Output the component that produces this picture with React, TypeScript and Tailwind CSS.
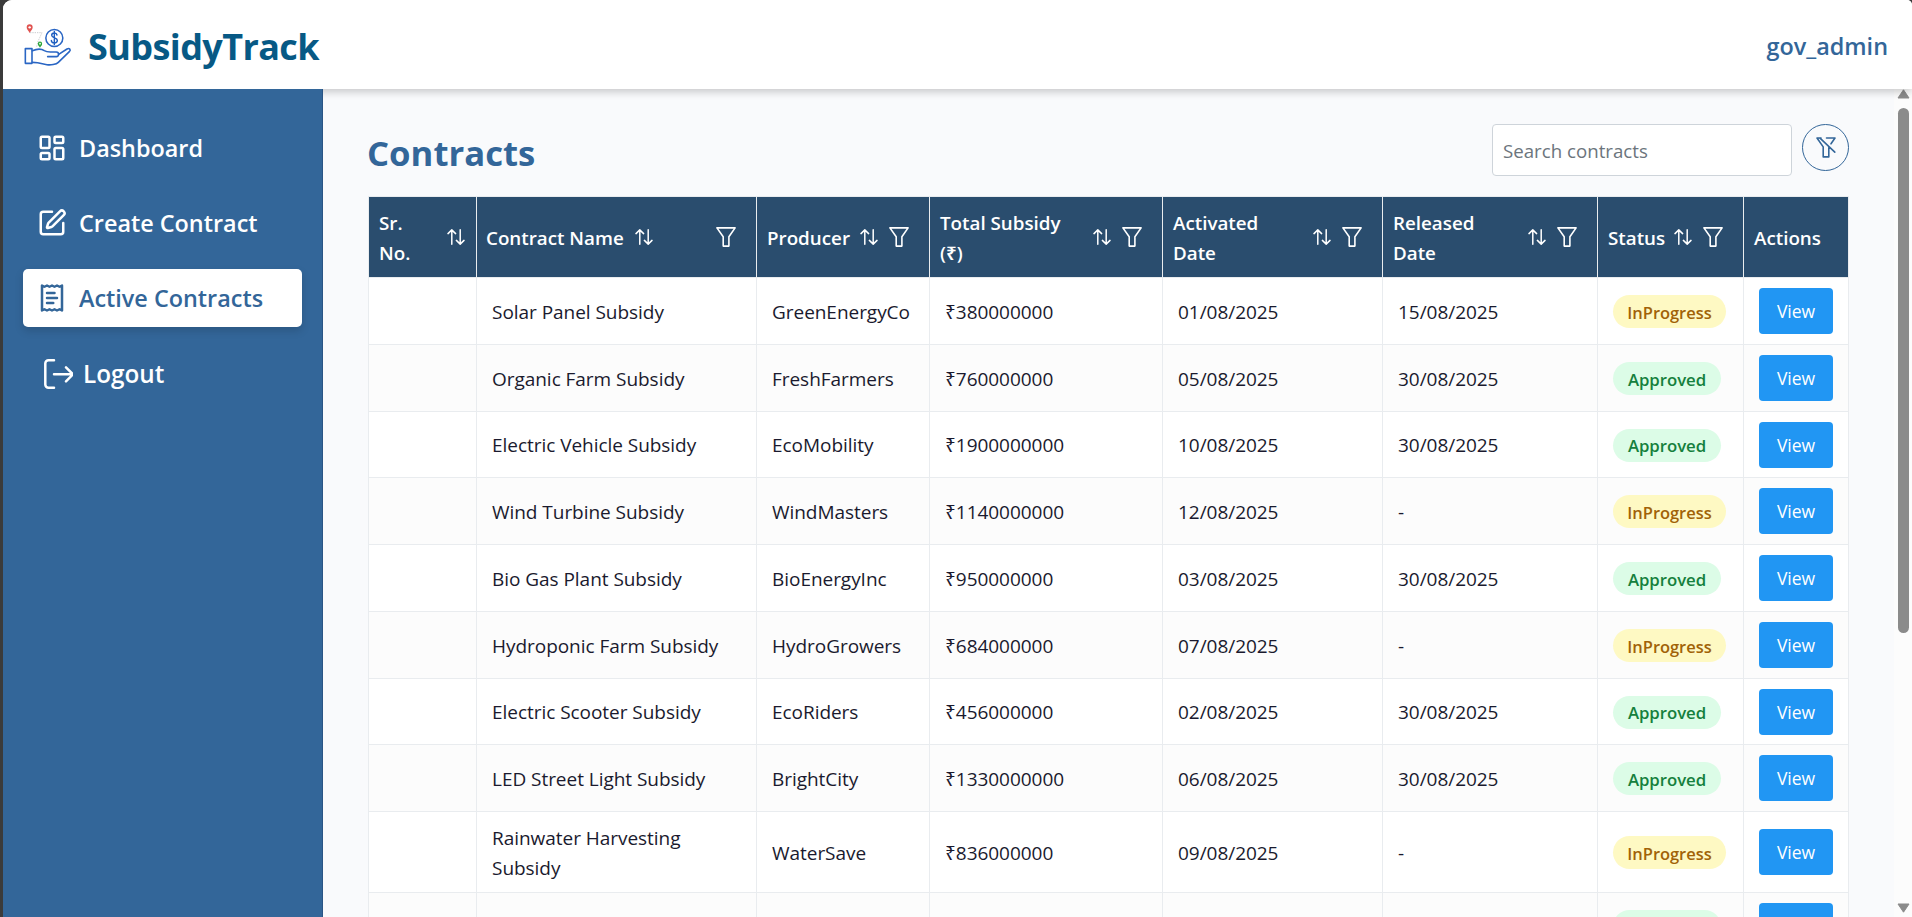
import React from "react";
import { LuLayoutDashboard, LuSquarePen, LuReceiptText } from "react-icons/lu";

type Status = "InProgress" | "Approved";

interface Contract {
  name: string;
  producer: string;
  subsidy: string;
  activated: string;
  released: string;
  status: Status;
  height: string;
}

const contracts: Contract[] = [
  { name: "Solar Panel Subsidy", producer: "GreenEnergyCo", subsidy: "₹380000000", activated: "01/08/2025", released: "15/08/2025", status: "InProgress", height: "h-[67px]" },
  { name: "Organic Farm Subsidy", producer: "FreshFarmers", subsidy: "₹760000000", activated: "05/08/2025", released: "30/08/2025", status: "Approved", height: "h-[67px]" },
  { name: "Electric Vehicle Subsidy", producer: "EcoMobility", subsidy: "₹1900000000", activated: "10/08/2025", released: "30/08/2025", status: "Approved", height: "h-[66px]" },
  { name: "Wind Turbine Subsidy", producer: "WindMasters", subsidy: "₹1140000000", activated: "12/08/2025", released: "-", status: "InProgress", height: "h-[67px]" },
  { name: "Bio Gas Plant Subsidy", producer: "BioEnergyInc", subsidy: "₹950000000", activated: "03/08/2025", released: "30/08/2025", status: "Approved", height: "h-[67px]" },
  { name: "Hydroponic Farm Subsidy", producer: "HydroGrowers", subsidy: "₹684000000", activated: "07/08/2025", released: "-", status: "InProgress", height: "h-[67px]" },
  { name: "Electric Scooter Subsidy", producer: "EcoRiders", subsidy: "₹456000000", activated: "02/08/2025", released: "30/08/2025", status: "Approved", height: "h-[66px]" },
  { name: "LED Street Light Subsidy", producer: "BrightCity", subsidy: "₹1330000000", activated: "06/08/2025", released: "30/08/2025", status: "Approved", height: "h-[67px]" },
  { name: "Rainwater Harvesting Subsidy", producer: "WaterSave", subsidy: "₹836000000", activated: "09/08/2025", released: "-", status: "InProgress", height: "h-[81px]" },
];

function Logo() {
  return (
    <svg width="60" height="56" viewBox="0 0 180 168" fill="none" className="shrink-0">
      <path d="M29 48C25 41 20 37 20 31a9 9 0 0 1 18 0c0 6-5 10-9 17z" fill="#e0524f" />
      <circle cx="29" cy="31" r="3.6" fill="#fff" />
      <path d="M30 47h36l-12 26-4 16" stroke="#9aa0a6" strokeWidth="1.6" strokeDasharray="4 3" />
      <path d="M60 92c-3-5-6.500-8-6.500-12a6.500 6.500 0 0 1 13 0c0 4-3.500 7-6.500 12z" fill="#2aa53a" />
      <circle cx="60" cy="80" r="2.600" fill="#fff" />
      <circle cx="103" cy="63" r="25.500" stroke="#2a66c4" strokeWidth="4.600" />
      <path d="M111 54c-1-5-5-6-8-6-5 0-8 3-8 7 0 9 17 6 17 15 0 5-4 8-9 8s-9-3-9-8M103 43v40" stroke="#1f5fc0" strokeWidth="4.200" strokeLinecap="round" />
      <g stroke="#2a66c4" strokeWidth="4.800" strokeLinejoin="round" strokeLinecap="round">
        <path d="M16 95h20v44H16z" />
        <path d="M37 101c12-5 26-7 36 0 6 4 10 4 18 4h18c9 0 9 14 0 14H83" />
        <path d="M116 112l25-16c7-4 13 2 7 8l-33 32c-6 6-24 9-34 7l-28-6c-6-1-10-1-16-1" />
      </g>
    </svg>
  );
}

function SortIcon() {
  return (
    <svg width="18" height="16" viewBox="0 0 18 16" fill="none" stroke="currentColor" strokeWidth="1.500" strokeLinecap="round" strokeLinejoin="round" className="shrink-0">
      <path d="M4.800 15.200V1M1 4.600 4.800.9l3.800 3.700M13.200.8V15M9.400 11.400l3.800 3.700 3.800-3.700" />
    </svg>
  );
}

function FilterIcon() {
  return (
    <svg width="20" height="20" viewBox="0 0 20 20" fill="none" stroke="currentColor" strokeWidth="1.600" strokeLinejoin="round" className="shrink-0">
      <path d="M.9.900h18.200l-6.200 8.900v9.300H7.200V9.800z" />
    </svg>
  );
}

function FilterSlashIcon() {
  return (
    <svg width="20" height="21" viewBox="0 0 20 21" fill="none" stroke="currentColor" strokeWidth="1.600" strokeLinejoin="round" strokeLinecap="round">
      <path d="M5 1H1l6.200 8.900v10h5.600V10.500M10.500 1H19l-4 5.800M4 1.200l14.800 14" />
    </svg>
  );
}

function LogoutIcon() {
  return (
    <svg width="32" height="32" viewBox="0 0 32 32" fill="none" stroke="currentColor" strokeWidth="2.500" strokeLinecap="round" strokeLinejoin="round" className="shrink-0">
      <path d="M13 2.300H7.500a3.200 3.200 0 0 0-3.200 3.200v21a3.200 3.200 0 0 0 3.200 3.200H13M13 16.300h19M25 9.300l7 7-7 7" />
    </svg>
  );
}

function Th({ children, sort, filter, spread }: { children: React.ReactNode; sort?: boolean; filter?: boolean; spread?: boolean }) {
  return (
    <th className="border-r border-b border-[#e9ecef] bg-[#2a4d6e] p-0 pl-[10px] text-left align-middle text-[18.800px] font-semibold text-white">
      <div className="flex items-center">
        <span className={spread ? "-ml-px w-[149px] pt-px whitespace-nowrap" : "flex-1 pt-px"}>{children}</span>
        {sort && <SortIcon />}
        {spread && <span className="flex-1" />}
        {filter ? <span className="mr-5 ml-[11px] flex"><FilterIcon /></span> : sort ? <span className="w-[11px]" /> : null}
      </div>
    </th>
  );
}

function Td({ children }: { children?: React.ReactNode }) {
  return <td className="border-r border-b border-[#e9ecef] p-0 px-[15px] pt-px align-middle">{children}</td>;
}

function ActionTd({ children }: { children?: React.ReactNode }) {
  return (
    <td className="border-r border-b border-[#e9ecef] p-0 pl-[15px] align-middle">
      <button className="block h-[46px] w-[74px] rounded-[4px] bg-[#2196f3] text-[17.500px] text-white">{children}</button>
    </td>
  );
}

function StatusBadge({ status, label }: { status: Status; label?: string }) {
  return status === "Approved" ? (
    <span className="flex h-[33px] w-[108px] items-center justify-center rounded-full bg-[#dcfce7] pt-[2px] text-[16.800px] font-semibold text-[#15803d]">{label}</span>
  ) : (
    <span className="flex h-[33px] w-[113px] items-center justify-center rounded-full bg-[#fef9c3] pt-[2px] text-[16.500px] font-semibold text-[#a16207]">{label}</span>
  );
}

const navItem = "flex h-[58px] items-center rounded-[5px] text-[23.400px] font-semibold";

export default function App() {
  return (
    <div className="h-[917px] w-[1912px] overflow-hidden bg-[#3b3b3b] pl-[3px] font-['Open_Sans','Noto_Sans',sans-serif] text-[19px] leading-[30px] text-[#1a1a2e]">
      <div className="flex h-full flex-col overflow-hidden rounded-tl-[9px] rounded-tr-[5px] bg-white">
        <header className="relative z-10 flex h-[89px] shrink-0 items-center justify-between bg-white pr-6 pl-[17px] shadow-[0_3px_8px_rgba(0,0,0,0.2)]">
          <div className="flex items-center">
            <Logo />
            <span className="ml-2 pt-[4px] text-[36px] leading-[48px] font-bold tracking-[-0.600px] text-[#075985]">SubsidyTrack</span>
          </div>
          <span className="pt-[3px] text-[23.400px] font-semibold text-[#336699]">gov_admin</span>
        </header>

        <div className="flex min-h-0 flex-1">
          <aside className="z-20 w-[320px] shrink-0 border-r border-[#2a5585] bg-[#336699] px-5 pt-[30px] text-white">
            <nav className="flex flex-col gap-[17px]">
              <a className={`${navItem} pl-[14px]`}>
                <LuLayoutDashboard size={30} />
                <span className="ml-3">Dashboard</span>
              </a>
              <a className={`${navItem} pl-[14px]`}>
                <LuSquarePen size={30} />
                <span className="ml-3">Create Contract</span>
              </a>
              <a className={`${navItem} bg-white pl-[14px] text-[#336699] shadow-[0_4px_8px_rgba(0,0,0,0.15)]`}>
                <LuReceiptText size={30} />
                <span className="ml-3">Active Contracts</span>
              </a>
              <a className={`${navItem} mt-px pl-[18px]`}>
                <LogoutIcon />
                <span className="ml-[10px] text-[24.300px]">Logout</span>
              </a>
            </nav>
          </aside>

          <main className="min-w-0 flex-1 overflow-hidden bg-[#f9fafc] pt-[35px] pl-[45px]">
            <div className="flex w-[1481px] items-start justify-between">
              <h1 className="-ml-px pt-[5px] text-[34.700px] leading-[48px] font-bold text-[#336699]">Contracts</h1>
              <div className="flex items-start gap-[10px]">
                <div className="flex h-[52px] w-[300px] items-center rounded-[4px] border border-[#ced4da] bg-white pt-[2px] pl-[10px] text-[18.700px] text-[#6c757d]">Search contracts</div>
                <button className="flex size-[47px] items-center justify-center rounded-full border border-[#336699] text-[#336699]">
                  <FilterSlashIcon />
                </button>
              </div>
            </div>

            <table className="mt-[19px] w-[1481px] table-fixed border-separate border-spacing-0 border-t border-l border-[#e9ecef]">
              <colgroup>
                <col className="w-[108px]" />
                <col className="w-[280px]" />
                <col className="w-[173px]" />
                <col className="w-[233px]" />
                <col className="w-[220px]" />
                <col className="w-[215px]" />
                <col className="w-[146px]" />
                <col className="w-[105px]" />
              </colgroup>
              <thead>
                <tr className="h-[81px]">
                  <Th sort>Sr.<br />No.</Th>
                  <Th sort filter spread>Contract Name</Th>
                  <Th sort filter>Producer</Th>
                  <Th sort filter>Total Subsidy<br />(₹)</Th>
                  <Th sort filter>Activated<br />Date</Th>
                  <Th sort filter>Released<br />Date</Th>
                  <Th sort filter>Status</Th>
                  <Th>Actions</Th>
                </tr>
              </thead>
              <tbody className="tracking-[-0.040px]">
                {contracts.map((c) => (
                  <tr key={c.name} className={`${c.height} bg-white even:bg-[#fcfcfc]`}>
                    <Td />
                    <Td>{c.name}</Td>
                    <Td>{c.producer}</Td>
                    <Td>{c.subsidy}</Td>
                    <Td>{c.activated}</Td>
                    <Td>{c.released}</Td>
                    <Td><StatusBadge status={c.status} label={c.status} /></Td>
                    <ActionTd>View</ActionTd>
                  </tr>
                ))}
                <tr className="h-[67px] bg-[#fcfcfc]">
                  <Td />
                  <Td />
                  <Td />
                  <Td />
                  <Td />
                  <Td />
                  <Td><StatusBadge status="Approved" /></Td>
                  <ActionTd />
                </tr>
              </tbody>
            </table>
          </main>

          <div className="flex w-[18px] shrink-0 flex-col items-center bg-[#fcfcfc] pb-1 pl-px">
            <svg width="13" height="10" viewBox="0 0 13 10" className="shrink-0"><path d="M6.500.8 12 9H1z" fill="#8b8b8b" stroke="#8b8b8b" strokeLinejoin="round" /></svg>
            <div className="mt-[9px] h-[525px] w-[11px] rounded-full bg-[#8b8b8b]" />
            <svg width="13" height="10" viewBox="0 0 13 10" className="mt-auto shrink-0"><path d="M6.500 9.200 1 1h11z" fill="#8b8b8b" stroke="#8b8b8b" strokeLinejoin="round" /></svg>
          </div>
        </div>
      </div>
    </div>
  );
}
